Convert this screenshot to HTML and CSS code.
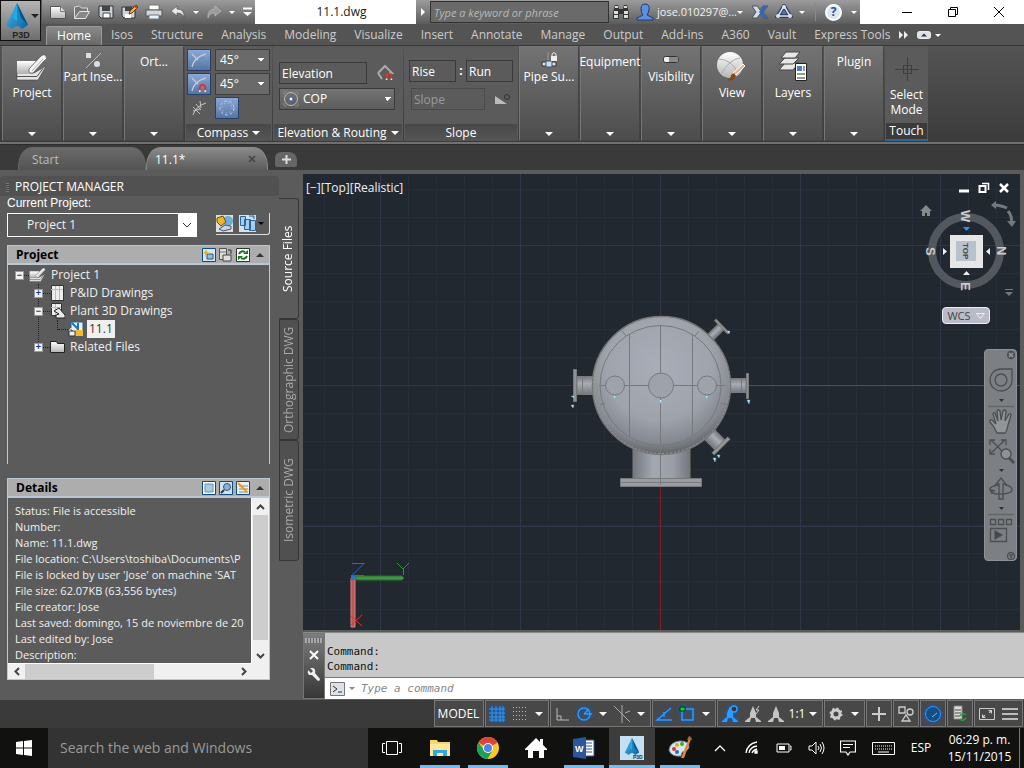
FILE: index.html
```html
<!DOCTYPE html>
<html lang="en">
<head>
<meta charset="utf-8">
<title>11.1.dwg</title>
<link rel="stylesheet" href="styles.css">
</head>
<body>
<svg class="defs" aria-hidden="true">
  <defs>
    <linearGradient id="paper" x1="0" y1="0" x2="0" y2="1"><stop offset="0" stop-color="#fff"/><stop offset="1" stop-color="#b4b4b4"/></linearGradient>
    <linearGradient id="blueA" x1="0" y1="0" x2="1" y2="1"><stop offset="0" stop-color="#4fc3f5"/><stop offset="1" stop-color="#0a5f9e"/></linearGradient>
    <symbol id="i-project" viewBox="0 0 32 28"><path d="M1 19h17l12-7-8 14H1z" fill="#e4e4e4" stroke="#444" stroke-width=".6"/><path d="M1 22.500h20l6-8" fill="none" stroke="#555"/><path d="M1 7h19l-3 12H1z" fill="url(#paper)"/><path d="M13 15L24 3q4-4 6-1 2 3-2 5l-11 12q-5 1-4-4z" fill="#f4f4f4" stroke="#555" stroke-width=".8"/><path d="M16 17L27 5" stroke="#aaa"/></symbol>
    <symbol id="i-a" viewBox="0 0 24 26"><path d="M12 0L23 22l-6 4q-5-6-10 0l-6-4z" fill="url(#blueA)"/><path d="M12 0L8 15l4 3 4-3z" fill="#1687c9"/><path d="M12 0l4 15 7 7z" fill="#075487"/><path d="M12 0v18l-4-3z" fill="#2aa9e6"/></symbol>
    <symbol id="i-person" viewBox="0 0 18 18"><path d="M9 1q5 0 4 6-1 4-2 5l6 3v2H1v-2l6-3Q5 10 5 6q0-5 4-5z" fill="#5f8fe0" stroke="#1b3b7a"/></symbol>
    <symbol id="i-arc" viewBox="0 0 18 18"><path d="M2 16Q4 6 16 3M2 3l6 6" fill="none" stroke="#c4ccd8" stroke-width="1.300"/></symbol>
    <symbol id="i-magnet" viewBox="0 0 10 10"><path d="M2 10V5a3 3 0 0 1 6 0v5" fill="none" stroke="#e0341c" stroke-width="2"/><path d="M1 9h2M7 9h2" stroke="#eee" stroke-width="2"/></symbol>
    <symbol id="i-anno" viewBox="0 0 18 18"><path d="M9 1l3 7v4l5 4v1H1v-1l5-4V8z M7 13l-1 4h6l-1-4z" fill="currentColor" fill-rule="evenodd"/></symbol>
  </defs>
</svg>

<header class="top">
  <button class="app" aria-label="Application menu"><svg width="24" height="26"><use href="#i-a"/></svg><i class="caret dark"></i><span>P3D</span></button>
  <div class="titlebar">
    <div class="qat">
      <button aria-label="New"><svg width="18" height="18"><path d="M1.500 3.500h10l5 5v7h-15z" fill="url(#paper)" stroke="#555"/><path d="M11.500 3.500v5h5" fill="#ddd" stroke="#777"/></svg></button>
      <button aria-label="Open"><svg width="18" height="18"><path d="M1.500 15V4l5-1 2 2h6v3" fill="#777" stroke="#ddd"/><path d="M1.500 15.500l5-7h10l-4 7z" fill="#888" stroke="#e6e6e6"/></svg></button>
      <button aria-label="Save"><svg width="18" height="18"><path d="M2 3h14v12H4l-2-2z" fill="#ccd2d9" stroke="#333"/><path d="M5 3h8v5H5z" fill="#444"/><path d="M6 10h7v5H6z" fill="#fff" stroke="#444"/></svg></button>
      <button aria-label="Save as"><svg width="18" height="18"><path d="M1 4h13v11H3l-2-2z" fill="#ccd2d9" stroke="#333"/><path d="M4 4h7v4H4z" fill="#444"/><path d="M4 11h6v4H4z" fill="#fff"/><path d="M8 11l1-3 6-6 2 2-6 6z" fill="#f0b63c" stroke="#5c3c10"/><path d="M14 3l2 2" stroke="#d33" stroke-width="2"/></svg></button>
      <button aria-label="Print"><svg width="18" height="18"><path d="M4 2h10v5H4z" fill="#fff" stroke="#777"/><path d="M1 7h16v6H1z" fill="#d5d8db" stroke="#555"/><path d="M4 12h10v4H4z" fill="#eaf4fa" stroke="#678"/></svg></button>
      <button aria-label="Undo"><svg width="18" height="18"><path d="M2 8l6-5v3q8 0 7 9-1-5-7-5v3z" fill="#e3e6ea" stroke="#555" stroke-width=".7"/></svg></button>
      <i class="caret"></i>
      <button aria-label="Redo"><svg width="18" height="18"><path d="M16 8l-6-5v3q-8 0-7 9 1-5 7-5v3z" fill="#9b9b9b" stroke="#bbb" stroke-width=".7"/></svg></button>
      <i class="caret"></i>
      <button class="narrow" aria-label="Customize"><svg width="9" height="10"><path d="M0 1.500h9" stroke="#fff" stroke-width="2"/><path d="M0 5h9L4.500 9z" fill="#fff"/></svg></button>
    </div>
    <h1>11.1.dwg</h1>
    <div class="info">
      <button class="narrow arrow" aria-label="Collapse search"><svg width="5" height="8"><path d="M0 0l4 4-4 4z" fill="#fff"/></svg></button>
      <input type="text" aria-label="Search" placeholder="Type a keyword or phrase">
      <button aria-label="Find"><svg width="18" height="18"><path d="M3 2h3l1 4h4l1-4h3l2 8v6h-6v-5H7v5H1v-6z" fill="#333"/><path d="M3 3h3v2H3zM12 3h3v2h-3zM2 8h4v3H2zM12 8h4v3h-4zM2 12h4v3H2zM12 12h4v3h-4z" fill="#ddd"/></svg></button>
      <button aria-label="Account"><svg width="18" height="18"><use href="#i-person"/></svg></button>
      <a href="#account">jose.010297@...</a><i class="caret"></i>
      <button class="exch" aria-label="Exchange"><svg width="18" height="16"><path d="M1 2h5l3 4 3-4h5l-5 6 5 6h-5l-3-4-3 4H1l4-6z" fill="#d7dce5" stroke="#345" stroke-width=".8"/><path d="M12 2h5l-5 6 5 6h-5L8 8z" fill="#3766b1"/></svg></button>
      <button aria-label="Autodesk 360"><svg width="18" height="16"><path d="M9 2L3 12h12z" fill="none" stroke="#253f70" stroke-width="4"/><path d="M9 2L3 12h12z" fill="none" stroke="#dbe3ee" stroke-width="1.500"/><circle cx="9" cy="3" r="2" fill="#dbe3ee"/><circle cx="3" cy="12" r="2" fill="#dbe3ee"/><circle cx="15" cy="12" r="2" fill="#dbe3ee"/></svg></button>
      <i class="caret"></i><i class="vsep"></i>
      <button class="help" aria-label="Help">?</button><i class="caret"></i>
    </div>
    <div class="win">
      <button aria-label="Minimize"><svg width="12" height="12"><path d="M1 6.500h10" stroke="#000"/></svg></button>
      <button aria-label="Restore"><svg width="12" height="12" fill="none" stroke="#000"><path d="M1.500 3.500h7v7h-7zM3.500 3V1.500h7v7H9"/></svg></button>
      <button aria-label="Close"><svg width="12" height="12"><path d="M1 1l10 10M11 1L1 11" stroke="#000"/></svg></button>
    </div>
  </div>
  <nav class="tabs">
    <a class="on" href="#home">Home</a><a href="#isos">Isos</a><a href="#structure">Structure</a><a href="#analysis">Analysis</a><a href="#modeling">Modeling</a><a href="#visualize">Visualize</a><a href="#insert">Insert</a><a href="#annotate">Annotate</a><a href="#manage">Manage</a><a href="#output">Output</a><a href="#addins">Add-ins</a><a href="#a360">A360</a><a href="#vault">Vault</a><a href="#express">Express Tools</a>
    <button aria-label="More tabs"><svg width="10" height="8"><path d="M0 0l4 4-4 4zM5 0l4 4-4 4z" fill="#eee"/></svg></button>
    <button class="mini" aria-label="Minimize ribbon"><svg width="14" height="8"><rect x=".5" y=".5" width="13" height="7" rx="2" fill="#dde2ea" stroke="#eee"/><path d="M4 5.500h6L7 2.500z" fill="#333"/></svg><i class="caret"></i></button>
  </nav>
</header>

<section class="ribbon" aria-label="Ribbon">
  <button class="panel"><svg class="big" width="32" height="28"><use href="#i-project"/></svg><span>Project</span><i class="caret"></i></button>
  <button class="panel"><svg class="small" width="18" height="18"><path d="M2 17L17 2" stroke="#bbb"/><path d="M2 2h5v5H2z" fill="#ddd"/><circle cx="13" cy="13" r="3" fill="#d8dfe8"/></svg><span>Part Inse...</span><i class="caret"></i></button>
  <button class="panel plain"><span>Ort...</span><i class="caret"></i></button>
  <div class="group compass">
    <div class="body">
      <button class="tgl" aria-label="Compass snap"><svg width="18" height="18"><use href="#i-arc"/></svg></button>
      <select aria-label="Compass angle"><option>45°</option></select>
      <button class="tgl" aria-label="Tolerance snap"><svg width="18" height="18"><use href="#i-arc"/><use href="#i-magnet" x="8" y="8" width="9" height="9"/></svg></button>
      <select aria-label="Tolerance angle"><option>45°</option></select>
      <button class="bare" aria-label="Tick marks"><svg width="18" height="18" fill="none" stroke="#c4c4c4"><path d="M3 16Q6 7 16 4M3 8l7 7M6 5l5 6M10 2l1 7M3 12l7-2"/></svg></button>
      <button class="tgl" aria-label="Toggle compass"><svg width="18" height="18" fill="none" stroke="#b9d0f0"><circle cx="9" cy="9" r="7" stroke-dasharray="3 2"/><circle cx="9" cy="9" r="5" stroke-dasharray="1 3"/></svg></button>
    </div>
    <h2>Compass <i class="caret"></i></h2>
  </div>
  <div class="group elev">
    <div class="body">
      <div class="line"><input type="text" aria-label="Elevation" value="Elevation"><svg width="18" height="18"><path d="M1 9l7-7 7 7-3 0M1 9l4 6" fill="none" stroke="#aaa" stroke-width="2"/><use href="#i-magnet" x="8" y="8" width="8" height="8"/></svg></div>
      <div class="cop"><svg width="16" height="16" fill="none" stroke="#bbb"><circle cx="8" cy="8" r="6.500"/><path d="M1 4V1h3M12 1h3v3M15 12v3h-3M4 15H1v-3" stroke="#888"/><circle cx="8" cy="8" r="2" fill="#fff" stroke="#36c"/></svg><select aria-label="Routing"><option>COP</option></select></div>
    </div>
    <h2>Elevation &amp; Routing <i class="caret"></i></h2>
  </div>
  <div class="group slope">
    <div class="body">
      <div class="line"><input type="text" aria-label="Rise" value="Rise"><b>:</b><input type="text" aria-label="Run" value="Run"></div>
      <div class="line"><input type="text" class="wide" aria-label="Slope" value="Slope" disabled><svg width="16" height="12"><path d="M0 3l12 8H0z" fill="#bbb"/><circle cx="12" cy="4" r="2.500" fill="none" stroke="#333"/></svg></div>
    </div>
    <h2>Slope</h2>
  </div>
  <button class="panel"><svg class="small" width="18" height="18"><path d="M8 1v8" stroke="#999"/><path d="M2 11h14v4H2z" fill="#ddd" stroke="#333"/><path d="M6 10h6v6H6z" fill="#bfe0f5" stroke="#456"/><path d="M11 5h6v5h-6z" fill="#eee"/><path d="M12 5V3q2-3 4 0v2" fill="none" stroke="#eee"/></svg><span>Pipe Su...</span><i class="caret"></i></button>
  <button class="panel plain"><span>Equipment</span><i class="caret"></i></button>
  <button class="panel"><svg class="small" width="18" height="18"><rect x="1.500" y="5.500" width="15" height="6" rx="2" fill="#eee" stroke="#333"/><path d="M7 6h9v5H7z" fill="#888"/></svg><span>Visibility</span><i class="caret"></i></button>
  <button class="panel"><svg class="big" width="32" height="32"><circle cx="14" cy="14" r="13" fill="url(#paper)"/><path d="M3 8q14 1 19 15M5 23Q14 8 24 7" fill="none" stroke="#aaa"/><path d="M29 15l-9 9-3-2 10-9z" fill="#e9b48a" stroke="#fff"/><path d="M20 25q-3 6-9 4 4-1 4-5l3-2z" fill="#8a4216"/></svg><span>View</span><i class="caret"></i></button>
  <button class="panel"><svg class="big" width="32" height="32"><g fill="#e6e6e6" stroke="#444"><path d="M2 19l6-7h14l-6 7z"/><path d="M2 13l6-6h14l-6 6z"/><path d="M4 7l5-6h14l-5 6z"/></g><path d="M18.500 12.500h11v17h-11z" fill="#fff" stroke="#222"/><path d="M20 15h5v5h-5z" fill="#4a7fc0"/><path d="M20 23h8M20 27h8M27 15v5" stroke="#333"/></svg><span>Layers</span><i class="caret"></i></button>
  <button class="panel plain"><span>Plugin</span><i class="caret"></i></button>
  <div class="group touch">
    <button class="body"><svg width="26" height="26" fill="none" stroke="#3a3f42"><path d="M13.500 1v24M1 13.500h24M9.500 9.500h8v8h-8z"/></svg><span>Select Mode</span></button>
    <h2>Touch</h2>
  </div>
</section>

<nav class="files">
  <a class="doc" href="#start">Start</a>
  <a class="doc on" href="#11-1">11.1* <svg width="8" height="8"><path d="M1 1l6 6M7 1L1 7" stroke="#444" stroke-width="1.600"/></svg></a>
  <button aria-label="New drawing"><svg width="9" height="9"><path d="M4.500 0v9M0 4.500h9" stroke="#ddd" stroke-width="2"/></svg></button>
</nav>

<main>
  <aside class="palette">
    <div class="sheet">
      <h2 class="ptitle"><i class="grip"></i>PROJECT MANAGER</h2>
      <div class="pbody">
        <label for="cur">Current Project:</label>
        <div class="currow">
          <div class="cursel"><select id="cur"><option>Project 1</option></select><svg width="18" height="22"><path d="M0 0h18v22H0z" fill="#fff"/><path d="M5 9l4 4 4-4" fill="none" stroke="#333"/></svg></div>
          <div class="tools">
            <button aria-label="Publish"><svg width="17" height="17"><path d="M0 0h17v17H0z" fill="#dedede"/><circle cx="12" cy="6" r="5" fill="#6ab0d8"/><path d="M1 3l6-2 3 6-5 4-4-4z" fill="#edb52b" stroke="#6b4b08"/><path d="M3 14l6-4 6 1v3l-8 2z" fill="#c9d2e2" stroke="#456"/></svg></button>
            <button aria-label="Reports"><svg width="17" height="17"><path d="M0 0h17v17H0z" fill="#cfe3f2"/><path d="M1.500 1.500h5v9h-5zM5.500 4.500h6v10h-6zM10.500 5.500h6v10h-6zM10 1h5v3" fill="#a7cde8" stroke="#26669c"/></svg></button><i class="caret black"></i>
          </div>
        </div>
        <section class="box tree">
          <header><h3>Project</h3>
            <button aria-label="New drawing"><svg width="14" height="14"><path d="M.500.500h13v13H.500z" fill="#d5e7f5" stroke="#0f4a80"/><path d="M5 6h6v5H5z" fill="#8fc0e0" stroke="#356"/><path d="M4 1l1 3 3 1-3 1-1 3-1-3-2-1 2-1z" fill="#e9ac1f"/></svg></button>
            <button aria-label="Copy drawing"><svg width="14" height="14"><path d="M.500.500h7v11h-7z" fill="#ddd" stroke="#555"/><path d="M1 4h6" stroke="#777"/><path d="M4 7h8v6H4z" fill="#ddd" stroke="#444"/><path d="M9 2h3v4" fill="none" stroke="#333"/></svg></button>
            <button aria-label="Refresh"><svg width="14" height="14"><path d="M.500.500h13v13H.500z" fill="#fff" stroke="#333"/><path d="M3 6q2-4 6-2M11 8q-2 4-6 2" fill="none" stroke="#187a20" stroke-width="2"/><path d="M7 6h5V2zM7 8H2v4z" fill="#187a20"/></svg></button>
            <button aria-label="Collapse"><svg width="14" height="14"><path d="M3 9h8L7 5z" fill="#333"/></svg></button>
          </header>
          <ul>
            <li><div><button class="exp">−</button><i class="dots"></i><svg width="17" height="16"><use href="#i-project"/></svg><span>Project 1</span></div>
              <ul>
                <li><div><button class="exp">+</button><i class="dots"></i><svg width="15" height="16"><path d="M1.500.500h12v15h-12z" fill="#eee" stroke="#333"/><path d="M1 4.500h12M5.500 1v14M9.500 1v14" stroke="#bbb"/></svg><span>P&amp;ID Drawings</span></div></li>
                <li><div><button class="exp">−</button><i class="dots"></i><svg width="15" height="16"><path d="M1.500.500h10v12h-10z" fill="#eee" stroke="#333"/><path d="M1 4.500h10M5.500 1v11" stroke="#bbb"/><path d="M4 8l5-3 6 7v3H6v-3l3-1z" fill="#e8e8e8" stroke="#222"/></svg><span>Plant 3D Drawings</span></div>
                  <ul class="leaf"><li><div><i class="dots"></i><svg width="16" height="16"><path d="M3 1h12v9H3z" fill="#e7f3fb" stroke="#1d5c96"/><path d="M4 2l6 6M10 2v7" stroke="#1b74bc" stroke-width="2"/><path d="M6 9h9v6H6z" fill="#f3b92f"/><path d="M1 10h6v5H1z" fill="#eee" stroke="#333"/><path d="M2 10V8q2-2 4 0v2" fill="none" stroke="#eee"/></svg><span class="sel">11.1</span></div></li></ul></li>
                <li><div><button class="exp">+</button><i class="dots"></i><svg width="15" height="16"><path d="M.500 2.500h6l1 2h7v9h-14z" fill="url(#paper)" stroke="#222"/></svg><span>Related Files</span></div></li>
              </ul></li>
          </ul>
        </section>
        <section class="box details">
          <header><h3>Details</h3>
            <button aria-label="Details view"><svg width="14" height="14"><path d="M.500.500h13v13H.500z" fill="#fff" stroke="#0f4a80"/><path d="M3 3h8v8H3z" fill="#a9cbe6" stroke="#6291b8"/></svg></button>
            <button aria-label="Preview"><svg width="14" height="14"><path d="M.500.500h13v13H.500z" fill="#cfe2f2" stroke="#0f4a80"/><circle cx="8" cy="6" r="3.500" fill="#84b3d9" stroke="#456"/><path d="M5 9l-3 3" stroke="#333" stroke-width="2"/></svg></button>
            <button aria-label="Work history"><svg width="14" height="14"><path d="M.500.500h13v13H.500z" fill="#eee" stroke="#0f4a80"/><path d="M3 5h9M3 8h9M3 11h9" stroke="#888"/><path d="M2 2l9 9" stroke="#e79a25" stroke-width="2"/></svg></button>
            <button aria-label="Collapse"><svg width="14" height="14"><path d="M3 9h8L7 5z" fill="#333"/></svg></button>
          </header>
          <div class="scroll">
            <div class="text"><p>Status: File is accessible</p><p>Number:</p><p>Name: 11.1.dwg</p><p>File location: C:\Users\toshiba\Documents\P</p><p>File is locked by user 'Jose' on machine 'SAT</p><p>File size: 62.07KB (63,556 bytes)</p><p>File creator: Jose</p><p>Last saved: domingo, 15 de noviembre de 20</p><p>Last edited by: Jose</p><p>Description:</p></div>
            <div class="vbar"><button aria-label="Scroll up"><svg width="9" height="6"><path d="M1 5l3.500-3.500L8 5" fill="none" stroke="#444" stroke-width="2"/></svg></button><i></i><button aria-label="Scroll down"><svg width="9" height="6"><path d="M1 1l3.500 3.500L8 1" fill="none" stroke="#444" stroke-width="2"/></svg></button></div>
            <div class="hbar"><button aria-label="Scroll left"><svg width="6" height="9"><path d="M5 1L1.500 4.500 5 8" fill="none" stroke="#444" stroke-width="2"/></svg></button><i></i><button aria-label="Scroll right"><svg width="6" height="9"><path d="M1 1l3.500 3.500L1 8" fill="none" stroke="#444" stroke-width="2"/></svg></button></div>
          </div>
        </section>
      </div>
    </div>
    <nav class="side"><a class="on" href="#source">Source Files</a><a href="#ortho">Orthographic DWG</a><a href="#iso">Isometric DWG</a></nav>
  </aside>

  <div class="work">
    <div class="view">
      <svg class="model" viewBox="0 0 717 456" preserveAspectRatio="xMinYMin slice">
        <defs>
          <radialGradient id="ball" cx=".48" cy=".36" r=".65"><stop offset="0" stop-color="#a9adb7"/><stop offset=".6" stop-color="#9ea3ac"/><stop offset=".85" stop-color="#858991"/><stop offset="1" stop-color="#5e6064"/></radialGradient>
          <linearGradient id="cyl" x1="0" x2="1" y1="0" y2="0"><stop offset="0" stop-color="#73777e"/><stop offset=".35" stop-color="#a3a7b0"/><stop offset=".7" stop-color="#9a9ea7"/><stop offset="1" stop-color="#74777c"/></linearGradient>
          <linearGradient id="cylh" x1="0" x2="0" y1="0" y2="1"><stop offset="0" stop-color="#777b82"/><stop offset=".4" stop-color="#a8acb5"/><stop offset="1" stop-color="#74777c"/></linearGradient>
          <pattern id="minor" width="28" height="28" x="21" y="15" patternUnits="userSpaceOnUse"><path d="M.500 0v28M0 .500h28" stroke="#272e39"/></pattern>
        </defs>
        <path d="M0 0h717v456H0z" fill="#212830"/>
        <path d="M0 0h717v456H0z" fill="url(#minor)"/>
        <path d="M77.500 0v456M217.500 0v456M357.500 0v456M497.500 0v456M637.500 0v456M0 71.500h717M0 211.500h358M0 352.500h717" stroke="#30374a"/>
        <path d="M358 211.500h359" stroke="#2b6a31"/><path d="M357.500 211v245" stroke="#832029"/>
        <g stroke="#77797b">
          <path d="M330 270h57v40h-57z" fill="url(#cyl)"/>
          <path d="M317.500 304.500h81v8h-81z" fill="#989ca4"/><path d="M317 308.500h82"/>
          <path d="M274 202.500h18v18h-18z" fill="url(#cylh)"/><path d="M270.500 195.500h3v32h-3zM279.500 202v18" fill="#8d9198"/>
          <path d="M427 204.500h16v14h-16z" fill="url(#cylh)"/><path d="M443.500 199.500h2v25h-2z" fill="#8d9198"/><path d="M438.500 205v13"/>
          <g transform="translate(357.500 211.500) rotate(-44)"><path d="M66-4h19V4H66z" fill="url(#cylh)"/><path d="M84-9h2V9h-2z" fill="#999"/></g>
          <g transform="translate(357.500 211.500) rotate(45)"><path d="M66-7h18V7H66z" fill="url(#cylh)"/><path d="M84-11h3v22h-3z" fill="#999"/></g>
          <circle cx="358.500" cy="211.500" r="69" fill="url(#ball)" stroke="#777" stroke-width="1.500"/>
          <circle cx="358.500" cy="211.500" r="68" fill="none" stroke="#999" stroke-dasharray="2 2"/>
          <ellipse cx="357.500" cy="211.500" rx="60.500" ry="60" fill="none"/>
          <path d="M357.500 151v160M297 211.500h125M326.500 160v102M389.500 160v102M319 157l4 5M396 157l-4 5M297 231l5-2M418 229l5 2" fill="none"/>
          <circle cx="312" cy="211.500" r="9.500" fill="#9da2ab"/><circle cx="358" cy="211.500" r="12.500" fill="#9da2ab"/><circle cx="404" cy="211.500" r="9.500" fill="#9da2ab"/>
        </g>
        <path d="M310 222h3l-1 3zM356 226h3l-1 4zM402 222h3l-1 3zM268 231h3l-1 3zM444 226h3l-1 4zM424 157h3l-1 3zM410 284h3l-1 4zM414 281h3l-1 3zM268 222h3v2z" fill="#d7f3ff" stroke="#58a9c8" stroke-width=".5"/>
        <path d="M48 404h4v49h-4z" fill="#bb5757" stroke="#d98080"/><path d="M53 402h46l2 2-2 2H53z" fill="#3f9443" stroke="#2c6e31"/><path d="M48 401h5v5h-5z" fill="#2c71cf"/>
        <path d="M49 389.500h12L49 401.500h12" fill="none" stroke="#1769e6"/><path d="M94 389l6 6 6-6M100.500 395v6" fill="none" stroke="#1fa01f"/><path d="M47 441l12 11M59 441L47 452" stroke="#f02a2a"/>
      </svg>
      <div class="vlabel"><button>[−]</button><button>[Top]</button><button>[Realistic]</button></div>
      <div class="vwin">
        <button aria-label="Minimize view"><svg width="12" height="12"><path d="M1 9h10" stroke="#fff" stroke-width="3"/></svg></button>
        <button aria-label="Restore view"><svg width="12" height="12" fill="none" stroke="#fff" stroke-width="1.500"><path d="M1.500 4h6v6h-6z" stroke-width="2"/><path d="M4 1.500h6.500V8"/></svg></button>
        <button aria-label="Close view"><svg width="12" height="12"><path d="M2 2l8 8M10 2l-8 8" stroke="#fff" stroke-width="2.500"/></svg></button>
      </div>
      <svg class="cube" width="100" height="100">
        <path d="M1 10l6-6 6 6h-2v5H8v-3H6v3H3v-5z" fill="#85888c"/>
        <circle cx="47" cy="50" r="34" fill="none" stroke="#53575e" stroke-width="8"/>
        <path d="M31 34h33v33H31z" fill="#e6e6e6"/><path d="M37 40h20v20H37z" fill="#b8c2cc"/>
        <g class="dir"><text transform="translate(42 9) rotate(90)">W</text><text transform="translate(78 45) rotate(90)">N</text><text transform="translate(42 81) rotate(90)">E</text><text transform="translate(7 46) rotate(90)">S</text></g>
        <text class="topface" transform="translate(44 42) rotate(90)">TOP</text>
        <path d="M44 26h7l-3.500 4z" fill="#3b8ef0"/><path d="M44 74h7l-3.500-4zM24 47v7l4-3.500zM71 47v7l-4-3.500z" fill="#eee"/>
        <path d="M76 4q8 1 12 3M89 10q5 6 3 13" fill="none" stroke="#74777b" stroke-width="3"/><path d="M72 4l5-4v8zM88 20h9l-4 6zM86 91h8l-4 4zM86 88h8v1h-8z" fill="#74777b"/>
      </svg>
      <button class="wcs">WCS <svg width="9" height="6"><path d="M.500.500h8l-4 5z" fill="none" stroke="#eee"/></svg></button>
      <div class="navbar">
        <svg width="32" height="210" fill="none" stroke="#4b4e52" stroke-width="1.300">
          <circle cx="26" cy="5" r="3.500" fill="#54575b"/><path d="M24 3l4 4M28 3l-4 4" stroke="#999"/>
          <path d="M16 19h11v10a11 11 0 1 1-11-10z"/><circle cx="16" cy="30" r="6"/>
          <path d="M14 49h5l-2.500 3zM14 119h5l-2.500 3zM14 157h5l-2.500 3z" fill="#333" stroke="none"/><path d="M3 56.500h26M3 164.500h26" stroke="#666"/>
          <path d="M12 83Q9 76 5 72q-1-3 2-2l4 4-3-10q0-2 2-1l3 8-1-10q1-2 3 0l1 9 2-9q2-2 3 0l-1 10 4-7q2-1 2 1l-3 10q-1 6-3 8z" fill="#929598"/>
          <path d="M6 90l15 15M20 90L5 104M5 95v-5h5M16 90h5v5M5 99v5h5"/><circle cx="21" cy="104" r="5" fill="#8f9296"/><path d="M24 108l5 5" stroke-width="3"/>
          <path d="M14 149v-15h-3l5-6 5 6h-3v15z"/><path d="M14 135q-10 1-9 5 2 5 13 4 9-1 9-4 0-4-7-5M10 141l-4-1 1 4"/>
          <path d="M5.500 169.500h5v5h-5zM13.500 169.500h5v5h-5zM21.500 169.500h5v5h-5zM5.500 178.500h16v13h-16z"/><path d="M10 181l7 4-7 4z" fill="#44474a"/>
          <circle cx="26" cy="206" r="3.500"/><path d="M24 205h4M25 207h2"/>
        </svg>
      </div>
    </div>
    <div class="cmd">
      <div class="cmdgrip"><i></i>
        <button aria-label="Close command line"><svg width="10" height="10"><path d="M1 1l8 8M9 1L1 9" stroke="#fff" stroke-width="2"/></svg></button>
        <button aria-label="Customize command line"><svg width="14" height="14"><path d="M3 1l3 3-2 2-3-3q-1 3 1 5l3 0 6 6q2 0 2-2L8 6q1-4-2-5z" fill="#eee"/></svg></button>
      </div>
      <div class="cmdmain"><div class="hist"><p>Command:</p><p>Command:</p></div>
        <div class="cmdline"><svg width="15" height="14"><path d="M.500.500h14v13H.500z" fill="#dde2e8" stroke="#777"/><path d="M3 4l4 3-4 3M8 10h4" fill="none" stroke="#333"/></svg><i class="caret grey"></i><input type="text" aria-label="Command" placeholder="Type a command"></div></div>
    </div>
  </div>
</main>

<footer class="status">
  <div><button class="modelb">MODEL</button></div>
  <div><button class="glow" aria-label="Grid"><svg width="16" height="16"><path d="M3 0v16M7 0v16M11 0v16M14 0v16M0 3h16M0 7h16M0 11h16M0 14h16" stroke="#2b9bff"/></svg></button><button class="mid" aria-label="Snap"><svg width="16" height="16"><path d="M1 1.500h15M1 5.500h15M1 9.500h15M1 13.500h15" stroke="#bbb" stroke-dasharray="1 2"/></svg></button><i class="caret"></i></div>
  <div><button aria-label="Ortho"><svg width="14" height="14"><path d="M2 1v12h12M2 9h4v4" fill="none" stroke="#bbb"/></svg></button><button class="glow" aria-label="Polar"><svg width="16" height="16" fill="none" stroke="#2b9bff" stroke-width="1.400"><circle cx="8" cy="8" r="6"/><path d="M8 8h8M8 8l5-5"/></svg></button><i class="caret"></i><button aria-label="Isodraft"><svg width="18" height="18"><path d="M1 1l16 16M9 0v18M12 8l5-2" stroke="#aaa"/></svg></button><i class="caret"></i></div>
  <div><button class="glow" aria-label="Object snap tracking"><svg width="18" height="16"><path d="M16 2L2 14h15M9 6v5" fill="none" stroke="#2b9bff" stroke-width="1.400"/></svg></button><button class="glow mid" aria-label="Object snap"><svg width="16" height="16"><path d="M3 3h11v11H3z" fill="none" stroke="#2b9bff" stroke-width="1.500"/><path d="M1 1h5v4H1z" fill="#0d2" stroke="#031"/></svg></button><i class="caret"></i></div>
  <div class="anno"><button class="glow mid" aria-label="Annotation visibility"><svg width="18" height="18"><use href="#i-anno"/><circle cx="13" cy="4" r="3" fill="#333" stroke="currentColor" stroke-width="1.500"/></svg></button><button class="mid" aria-label="Auto scale"><svg width="18" height="18"><use href="#i-anno"/><path d="M15 1l-3 4h3l-3 4" fill="none" stroke="#ccc"/></svg></button><button class="mid" aria-label="Annotation scale"><svg width="18" height="18"><use href="#i-anno"/></svg></button><button class="scale">1:1</button><i class="caret"></i></div>
  <div><button aria-label="Workspace"><svg width="14" height="14"><circle cx="7" cy="7" r="4" fill="none" stroke="#ccc" stroke-width="3"/><circle cx="7" cy="7" r="5.500" fill="none" stroke="#ccc" stroke-width="2" stroke-dasharray="2 2.300"/></svg></button><i class="caret"></i></div>
  <div><button aria-label="Annotation monitor"><svg width="16" height="16"><path d="M8 1v14M1 8h14" stroke="#ccc" stroke-width="2"/></svg></button></div>
  <div><button aria-label="Isolate"><svg width="16" height="16" fill="none" stroke="#ccc" stroke-width="1.300"><path d="M1 1h6v6H1zM4 15l4-6 4 6z"/><circle cx="12" cy="6" r="3"/></svg></button></div>
  <div><button class="glow" aria-label="Hardware acceleration"><svg width="18" height="18"><circle cx="9" cy="9" r="7.500" fill="#174e88" stroke="#2b9bff"/><path d="M8 12l5-4" stroke="#8bd"/></svg></button></div>
  <div><button aria-label="Clean"><svg width="18" height="18"><path d="M3 1h8v13H3z" fill="#ddd" stroke="#888"/><path d="M4 5h6M4 8h6M4 11h5" stroke="#444"/><path d="M9 11q3-4 6-1M15 13q-3 4-6 1" fill="none" stroke="#22a33a" stroke-width="1.500"/></svg></button></div>
  <div><button class="mid" aria-label="Full screen"><svg width="16" height="14"><path d="M.500 1.500h15v11H.500z" fill="none" stroke="#ccc"/><path d="M9 3h4v4zM3 7v4h4z" fill="#ccc"/><path d="M4 10l2-2M12 4l-2 2" stroke="#ccc"/></svg></button><button class="mid" aria-label="Customization"><svg width="16" height="14"><path d="M0 2h16M0 7h16M0 12h16" stroke="#bbb" stroke-width="2"/></svg></button></div>
</footer>

<footer class="taskbar">
  <button class="start" aria-label="Start"><svg width="16" height="16"><path d="M0 2l7-1v6.500H0zM8 1l8-1v7.500H8zM0 8.500h7V15l-7-1zM8 8.500h8V16l-8-1z" fill="#fff"/></svg></button>
  <input type="text" aria-label="Search" placeholder="Search the web and Windows">
  <button aria-label="Task view"><svg width="20" height="16" fill="none" stroke="#fff"><path d="M4.500 1.500h11v13h-11zM3 3.500H.500v9H3M17 3.500h2.500v9H17"/></svg></button>
  <button class="run" aria-label="File Explorer"><svg width="22" height="20"><path d="M1 2h7l1 2h12v14H1z" fill="#f9d66d"/><path d="M1 6h20v12H1z" fill="#fde59a"/><path d="M4 18v-6h14v6h-4v-3H8v3z" fill="#2aa8e8"/></svg></button>
  <button class="run" aria-label="Chrome"><svg width="22" height="22"><circle cx="11" cy="11" r="11" fill="#f7c927"/><path d="M11 11L1.500 5.500A11 11 0 0 1 20.500 5.500z" fill="#dc4437"/><path d="M11 0a11 11 0 0 1 9.500 6H11z" fill="#dc4437"/><path d="M1.500 5.500A11 11 0 0 0 10.500 22L15 14l-8-1z" fill="#1da05a"/><circle cx="11" cy="11" r="5" fill="#fff"/><circle cx="11" cy="11" r="4" fill="#4a86ec"/></svg></button>
  <button aria-label="Home"><svg width="22" height="20"><path d="M11 0l4 4V1h3v6l4 4v1h-3v8h-5v-7H8v7H3v-8H0v-1z" fill="#fff"/></svg></button>
  <button class="run" aria-label="Word"><svg width="22" height="22"><path d="M11 3h10v16H11z" fill="#fff" stroke="#2b579a"/><path d="M13 6h6M13 9h6M13 12h6M13 15h6" stroke="#2b579a"/><path d="M0 2l13-2v22L0 20z" fill="#2b579a"/><text x="2" y="15" class="wordw">W</text></svg></button>
  <button class="run active" aria-label="Plant 3D"><svg width="24" height="24"><path d="M0 0h24v24H0z" fill="#c5dff0"/><use href="#i-a" x="4" y="2" width="16" height="17"/><text x="13" y="23" class="p3d">P3D</text></svg></button>
  <button class="run" aria-label="Paint"><svg width="24" height="24"><path d="M1 14Q2 6 12 5q9 0 9 6-1 4-5 4-3 1-3 5-10 1-12-6z" fill="#d7e8f2" stroke="#789"/><circle cx="6" cy="13" r="2" fill="#d33"/><circle cx="9" cy="9" r="2" fill="#e8a020"/><circle cx="14" cy="8" r="2" fill="#3a3"/><circle cx="9" cy="16" r="2" fill="#36c"/><path d="M21 2l-8 20h3l7-19z" fill="#e08a34"/><path d="M19 4l2-4 2 1 1 3z" fill="#a36a3c"/></svg></button>
  <div class="tray">
    <button aria-label="Hidden icons"><svg width="12" height="8"><path d="M1 7l5-5 5 5" fill="none" stroke="#fff" stroke-width="1.300"/></svg></button>
    <button aria-label="Network"><svg width="14" height="14" fill="none" stroke="#fff" stroke-width="1.300"><path d="M1 12Q2 3 12 1M4 12q1-6 8-7M7 12q1-3 5-4"/><path d="M10 10h2v2h-2z" fill="#fff"/></svg></button>
    <button aria-label="Battery"><svg width="16" height="10"><path d="M1 1h12v8H1zM14 3h1v4h-1" fill="none" stroke="#fff"/><path d="M3 3h6v4H3z" fill="#fff"/></svg></button>
    <button aria-label="Volume"><svg width="17" height="14" fill="none" stroke="#fff"><path d="M1 5h3l4-4v12L4 9H1zM10 5q2 2 0 4M12 3q3 4 0 8M14 1q4 6 0 12"/></svg></button>
    <button aria-label="Notifications"><svg width="16" height="16" fill="none" stroke="#fff" stroke-width="1.200"><path d="M.500 1h15v11H10l-2 3-2-3H.500zM3 4.500h10M3 7.500h7"/></svg></button>
    <button class="kb" aria-label="Keyboard"><svg width="23" height="13" fill="none" stroke="#fff"><path d="M.500.500h22v12H.500z"/><path d="M3 4h18M3 7h18" stroke-dasharray="1 1"/><path d="M6 10h11"/></svg></button>
    <button class="esp">ESP</button>
    <button class="clock"><span>06:29 p. m.</span><span>15/11/2015</span></button>
  </div>
</footer>
</body>
</html>
```

FILE: styles.css
```css
* { box-sizing: border-box; }
body { margin: 0; min-height: 100vh; display: flex; flex-direction: column; background: #5b5b5b; color: #f0f0f0; font: 12px/16px "Open Sans", "Noto Sans", sans-serif; overflow-x: hidden; }
button, input, select { font: inherit; color: inherit; border: 0; padding: 0; margin: 0; background: none; border-radius: 0; outline: 0; }
button { display: flex; align-items: center; justify-content: center; flex: none; }
a { color: inherit; text-decoration: none; }
h1, h2, h3, p, ul { margin: 0; padding: 0; font-size: inherit; font-weight: normal; list-style: none; }
svg { flex: none; display: block; }
select { appearance: none; }
.defs { position: absolute; width: 0; height: 0; }
.caret { flex: none; display: inline-block; width: 0; height: 0; border: 4px solid transparent; border-top-color: #fff; border-bottom: 0; }
.caret.dark { border-top-color: #222; }
.caret.black { border-top-color: #000; }
.caret.grey { border-top-color: #888; }

.top { display: grid; grid-template-columns: 42px 1fr; grid-template-rows: 24px 21px; background: #545454; }
.app { grid-row: 1 / 3; width: 41px; height: 41px; border: 1px solid #111; background: linear-gradient(#b4b4b4, #6e6e6e); display: grid; grid-template-columns: 28px 8px; justify-content: start; justify-items: center; align-items: center; padding: 2px 0 0 2px; }
.app span { grid-column: 1 / 3; font: bold 9px/10px "Liberation Sans", sans-serif; color: #222; }
.titlebar { display: flex; background: #fff; min-width: 0; }
.qat, .info { display: flex; align-items: center; background: linear-gradient(#9c9c9c, #5c5c5c); }
.qat { width: 213px; padding-left: 4px; }
.qat button, .info button { width: 24px; height: 24px; }
.qat .caret, .info .caret { border-width: 3px; border-bottom: 0; margin: 0 3px; }
.qat .narrow { width: 18px; }
.titlebar h1 { flex: 1; text-align: center; color: #222; line-height: 24px; padding-left: 12px; }
.info { width: 444px; }
.info .narrow { width: 14px; }
.info input { width: 179px; height: 22px; border: 1px solid #333; background: #6a6a6a; padding: 0 3px; font-style: italic; font-size: 11px; }
.info input::placeholder { color: #b8b8b8; opacity: 1; }
.info a { flex: 1; min-width: 0; white-space: nowrap; font-size: 11px; }
.info .exch { margin-left: 2px; }
.vsep { width: 1px; height: 18px; background: #888; margin: 0 4px 0 7px; }
.info .help { width: 17px; height: 17px; border: 2px solid #fff; border-radius: 50%; background: #dce6f2; color: #1f4f9a; font-weight: bold; margin: 0 6px 0 5px; }
.win { width: 164px; display: flex; align-items: center; justify-content: end; padding-right: 2px; }
.win button { width: 46px; height: 24px; }
.tabs { display: flex; align-items: end; padding-left: 4px; color: #ccc; min-width: 0; }
.tabs a { padding: 0 9px; line-height: 20px; white-space: nowrap; }
.tabs a.on { width: 56px; text-align: center; background: linear-gradient(#8a8a8a, #686868); border: 1px solid #999; border-bottom: 0; border-radius: 2px 2px 0 0; color: #fff; line-height: 18px; }
.tabs button { height: 20px; gap: 4px; }
.tabs .mini { margin-left: 8px; }
.tabs .caret { border-width: 3px; border-bottom: 0; }

.ribbon { display: flex; gap: 1px; padding: 0 0 1px 2px; height: 99px; border-top: 1px solid #383838; border-bottom: 2px solid #707070; background: linear-gradient(#545454, #3b3b3b); }
.panel { width: 60px; flex-direction: column; justify-content: start; background: linear-gradient(#737373, #4c4c4c); border: 1px solid #777; border-color: #777 #444 #444 #777; padding: 4px 0 4px; color: #fff; white-space: nowrap; }
.panel .big { height: 34px; }
.panel .small { height: 18px; }
.panel.plain { padding-top: 7px; }
.panel .caret { margin-top: auto; }
.group { display: flex; flex-direction: column; background: #5b5b5b; color: #fff; }
.group h2 { background: linear-gradient(#484848, #555); text-align: center; line-height: 17px; white-space: nowrap; margin: 0 1px; }
.group h2 .caret { margin: 0 0 2px 1px; }
.group .body { flex: 1; }
.compass { width: 87px; }
.compass .body { display: grid; grid-template-columns: 24px 55px; grid-auto-rows: 22px; gap: 2px 4px; padding: 3px 2px; }
.tgl { width: 24px; border: 1px solid #27406b; background: linear-gradient(#8aa8d8, #56759f); }
.bare { width: 24px; }
.group select { border: 1px solid #3c3c3c; padding: 0 4px; color: #fff; background: linear-gradient(45deg, transparent 50%, #fff 50%) right 8px top 8px / 4px 4px no-repeat, linear-gradient(-45deg, transparent 50%, #fff 50%) right 4px top 8px / 4px 4px no-repeat, #6a6a6a; }
.group input { height: 22px; border: 1px solid #3a3a3a; background: #5b5b5b; padding: 0 2px; }
.elev { width: 130px; }
.elev .body { padding: 16px 8px 0 6px; display: flex; flex-direction: column; gap: 4px; }
.line { display: flex; align-items: center; }
.elev .line { justify-content: space-between; }
.elev input { width: 88px; }
.cop { display: flex; align-items: center; border: 1px solid #3a3a3a; background: linear-gradient(#747474, #5d5d5d); height: 22px; padding-left: 3px; }
.cop select { flex: 1; border: 0; background-color: transparent; background-position: right 6px top 6px, right 2px top 6px; }
.slope { width: 114px; }
.slope .body { padding: 14px 5px 0; display: flex; flex-direction: column; gap: 6px; }
.slope input { flex: 1; min-width: 0; }
.slope b { width: 10px; text-align: center; }
.slope .wide { flex: none; width: 74px; margin-left: 2px; margin-right: 10px; color: #999; border-color: #4a4a4a; }
.touch { width: 43px; }
.touch .body { flex-direction: column; justify-content: end; padding-bottom: 6px; }
.touch .body span { width: 40px; line-height: 15px; padding-top: 5px; }
.touch h2 { border-bottom: 2px solid #2f6690; background: #3a3a3a; line-height: 16px; }

.files { display: flex; align-items: end; height: 26px; background: #3a3a3a; padding-left: 18px; border-top: 1px solid #2c2c2c; }
.doc { width: 128px; height: 23px; line-height: 23px; padding: 0 13px; color: #bbb; background: linear-gradient(#6a6a6a, #535353); border: 1px solid #666; border-bottom: 0; border-radius: 14px 14px 0 0 / 20px 20px 0 0; display: flex; align-items: center; justify-content: space-between; }
.doc.on { width: 122px; padding: 0 11px 0 8px; color: #fff; background: linear-gradient(#8a8a8a, #5b5b5b); border-color: #888; }
.files button { width: 22px; height: 15px; margin: 0 0 3px 7px; background: #666; border-radius: 6px 8px 2px 2px; }

main { flex: 1; display: flex; }
.palette { width: 303px; flex: none; display: flex; padding-top: 6px; }
.sheet { width: 279px; display: flex; flex-direction: column; }
.ptitle { display: flex; align-items: center; gap: 6px; height: 20px; background: #515151; border-radius: 4px 4px 0 0; padding: 2px 0 0 6px; color: #fff; }
.grip { width: 3px; height: 9px; background: repeating-linear-gradient(#777 0 1px, #444 1px 2px); }
.pbody { flex: 1; display: flex; flex-direction: column; padding: 0 9px 20px 7px; }
.pbody label { font: 12px/14px "Liberation Sans", sans-serif; color: #fff; }
.currow { display: flex; justify-content: space-between; margin-top: 3px; }
.cursel { display: flex; width: 190px; height: 24px; border: 1px solid #fff; }
.cursel select { flex: 1; padding-left: 19px; }
.tools { display: flex; align-items: center; gap: 6px; height: 22px; border: solid #ddd; border-width: 0 1px 1px 0; border-radius: 0 0 3px 0; padding-right: 5px; }
.tools .caret { margin-left: -4px; border-width: 3px; border-bottom: 0; }
.box { border: 1px solid #b9c8d4; }
.box header { display: flex; align-items: center; gap: 3px; height: 19px; background: #adadad; border-bottom: 2px solid #b9c8d4; padding: 0 2px 0 8px; color: #000; }
.box h3 { flex: 1; font-weight: bold; }
.tree { flex: 1; margin-top: 8px; border-bottom: 0; }
.tree > ul { padding: 1px 0 0 7px; }
.tree li > div { display: flex; align-items: center; height: 18px; }
.tree li span { margin-left: 5px; }
.tree ul ul { margin-left: 23px; border-left: 1px dotted #222; height: 66px; }
.tree ul ul li > div { margin-left: -5px; }
.tree ul ul .dots { width: 7px; }
.tree ul ul.leaf { margin-left: 18px; height: 10px; margin-bottom: 8px; }
.tree ul ul.leaf li > div { margin-left: 0; }
.tree ul .leaf .dots { width: 10px; }
.exp { width: 9px; height: 9px; background: #f2f2f2; border: 1px solid #999; color: #113a8c; font: bold 9px/7px "Liberation Sans", sans-serif; }
.dots { width: 5px; border-top: 1px dotted #222; }
.tree .sel { background: #f0f0f0; color: #333; padding: 1px 2px; margin-left: 3px; }
.details { margin-top: 14px; }
.scroll { display: grid; grid-template: 166px 15px / 1fr 17px; background: #f0f0f0; }
.text { background: #5b5b5b; overflow: hidden; white-space: nowrap; padding: 5px 0 0 7px; border: solid #fff; border-width: 0 1px 1px 0; font-size: 11px; }
.vbar, .hbar { display: flex; align-items: center; justify-content: space-between; }
.vbar { flex-direction: column; }
.vbar button, .hbar button { width: 17px; height: 17px; }
.vbar i { width: 15px; flex: 1; margin-bottom: 7px; background: #cdcdcd; }
.hbar i { height: 15px; width: 129px; background: #cdcdcd; margin-right: auto; }
.side { display: flex; flex-direction: column; padding-top: 22px; width: 20px; }
.side a { height: 121px; width: 20px; writing-mode: vertical-rl; transform: rotate(180deg); text-align: center; line-height: 18px; color: #aaa; background: #505050; border: 1px solid #363636; border-radius: 3px 0 0 3px; }
.side a.on { color: #fff; background: #5b5b5b; border-right: 0; }

.work { flex: 1; min-width: 0; display: flex; flex-direction: column; }
.view { flex: 1; position: relative; margin: 4px 4px 0 0; min-height: 430px; overflow: hidden; background: #212830; }
.model { position: absolute; inset: 0; width: 100%; height: 100%; }
.vlabel { position: absolute; left: 3px; top: 6px; display: flex; }
.vwin { position: absolute; right: 10px; top: 8px; display: flex; gap: 8px; }
.cube { position: absolute; right: 1px; top: 27px; }
.dir text { font: bold 13px "Liberation Sans", sans-serif; fill: #ccc; }
.topface { font: bold 8px "Liberation Sans", sans-serif; fill: #444; }
.wcs { position: absolute; right: 30px; top: 133px; width: 48px; height: 17px; gap: 5px; border: 1px solid #eee; border-radius: 4px; background: #b9bbc8; color: #444; font-size: 11px; }
.navbar { position: absolute; right: 3px; top: 175px; border: 1px solid #8e9195; border-radius: 4px; background: #7c7f83; width: 33px; }
.cmd { display: flex; height: 67px; margin: 2px 0 1px; border-top: 1px solid #888; }
.cmdgrip { width: 22px; background: linear-gradient(#7d7d7d, #363636); display: flex; flex-direction: column; align-items: center; padding-top: 4px; gap: 7px; border: 1px solid #777; }
.cmdgrip i { width: 18px; height: 5px; background: repeating-linear-gradient(90deg, #aaa 0 2px, #666 2px 3px); }
.cmdmain { flex: 1; min-width: 0; display: flex; flex-direction: column; }
.hist { flex: 1; background: #c8c8c8; color: #111; padding: 11px 2px 0; font: 11px/15px "DejaVu Sans Mono", monospace; border-bottom: 1px solid #777; }
.cmdline { display: flex; align-items: center; height: 21px; background: #fff; padding-left: 5px; gap: 4px; color: #333; }
.cmdline .caret { border-width: 3px; border-bottom: 0; }
.cmdline input { flex: 1; font: italic 11px/16px "DejaVu Sans Mono", monospace; margin-left: 2px; }
.cmdline input::placeholder { color: #888; opacity: 1; }

.status { display: flex; justify-content: end; height: 28px; background: #3a3a3a; padding: 0 1px 1px 0; gap: 1px; }
.status > div { display: flex; align-items: center; justify-content: center; min-width: 26px; border: 1px solid #777; background: #484848; padding-right: 1px; }
.status button { width: 22px; height: 24px; color: #c4c4c4; }
.status .mid { width: 23px; }
.status .caret { margin: 0 4px; }
.status .modelb { width: 47px; color: #fff; }
.status .glow { color: #2b9bff; filter: drop-shadow(0 0 2px #0a62d8); }
.status .scale { width: 20px; color: #fff; }
.status .anno .caret { margin-left: 2px; }

.taskbar { display: flex; height: 40px; background: #11120f; color: #fff; }
.taskbar .start { width: 48px; }
.taskbar > input { flex: none; width: 320px; background: #333; color: #aaa; padding: 0 12px; font-size: 14px; }
.taskbar > input::placeholder { color: #9a9a9a; opacity: 1; }
.taskbar > button { width: 48px; }
.taskbar .run { width: 40px; margin: 0 4px; border-bottom: 3px solid #76b9ed; padding-top: 3px; }
.taskbar .active { width: 46px; margin: 0 1px; background: #3d3e3b; }
.tray { flex: 1; display: flex; margin-right: 4px; border-right: 1px solid #777; justify-content: end; }
.tray button { width: 32px; }
.tray .kb { width: 38px; }
.tray .esp { width: 38px; }
.tray .clock { width: 79px; flex-direction: column; line-height: 17px; }
.wordw { font: bold 9px "Liberation Sans", sans-serif; fill: #fff; }
.p3d { font: bold 5px "Liberation Sans", sans-serif; fill: #234; }
```
